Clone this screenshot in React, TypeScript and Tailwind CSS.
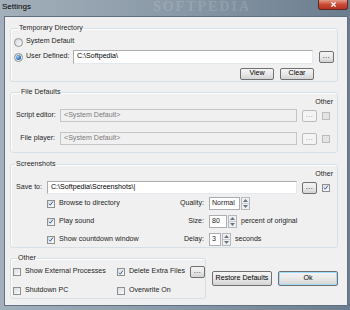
import React from "react";

const font = "font-['Liberation_Sans',Arial,sans-serif]";

function Check({ checked, disabled }: { checked?: boolean; disabled?: boolean }) {
  return (
    <span
      className={`flex h-[8px] w-[8px] shrink-0 items-center justify-center border ${
        disabled
          ? "border-[#bcbcbc] bg-[#e4e4e4]"
          : "border-[#8e8f8f] bg-linear-to-br from-[#d9dde2] to-[#fbfbfb]"
      }`}
    >
      {checked && (
        <svg viewBox="0 0 8 8" className="h-[7px] w-[7px]">
          <path d="M1.4 4.3 L3.1 6.2 L6.6 1.4" fill="none" stroke="#34589a" strokeWidth="1.3" />
        </svg>
      )}
    </span>
  );
}

function Radio({ checked }: { checked?: boolean }) {
  return (
    <span className="flex h-[9px] w-[9px] shrink-0 items-center justify-center rounded-full border border-[#8e8f8f] bg-linear-to-br from-[#d4d8dd] to-[#fafafa]">
      {checked && (
        <span className="h-[5px] w-[5px] rounded-full bg-[radial-gradient(circle_at_35%_35%,#9fd3f7_0%,#2d6fb4_60%,#1c4f8c_100%)]" />
      )}
    </span>
  );
}

function Btn({
  children,
  className = "",
  disabled,
}: {
  children: React.ReactNode;
  className?: string;
  disabled?: boolean;
}) {
  return (
    <div
      className={`flex shrink-0 items-center justify-center rounded-[2px] border leading-none ${
        disabled
          ? "border-[#b8bcc0] bg-[#f4f4f4] text-[#8a8a8a]"
          : "border-[#707070] bg-linear-to-b from-[#f4f4f4] via-[#e9e9e9] to-[#d3d3d3] text-black"
      } ${className}`}
    >
      {children}
    </div>
  );
}

function Dots({ disabled }: { disabled?: boolean }) {
  return (
    <Btn disabled={disabled} className="h-[12px] w-[15px] pb-[3px] text-[7px] tracking-[0.5px]">
      ...
    </Btn>
  );
}

function Field({
  value,
  className = "",
  disabled,
}: {
  value: string;
  className?: string;
  disabled?: boolean;
}) {
  return (
    <div
      className={`flex h-[13px] shrink-0 items-center border pl-[3px] leading-none ${
        disabled
          ? "border-[#c3c5c8] bg-[#f0f0f0] text-[#7a7a7a]"
          : "border-[#abadb3] border-b-[#e3e9ef] border-r-[#e3e9ef] bg-white text-black"
      } ${className}`}
    >
      {value}
    </div>
  );
}

function Spin({ value, className }: { value: string; className: string }) {
  return (
    <div className={`flex h-[13px] shrink-0 ${className}`}>
      <div className="flex flex-1 items-center border border-[#abadb3] bg-white pl-[2px] leading-none">
        {value}
      </div>
      <div className="ml-[1px] flex w-[9px] flex-col border border-[#b5b9bd] bg-[#eef0f2]">
        <span className="flex flex-1 items-center justify-center border-b border-[#c9cdd1]">
          <svg viewBox="0 0 5 3" className="h-[3px] w-[5px]">
            <path d="M0 3 L2.5 0 L5 3 Z" fill="#6a7480" />
          </svg>
        </span>
        <span className="flex flex-1 items-center justify-center">
          <svg viewBox="0 0 5 3" className="h-[3px] w-[5px]">
            <path d="M0 0 L2.5 3 L5 0 Z" fill="#6a7480" />
          </svg>
        </span>
      </div>
    </div>
  );
}

function Group({
  title,
  className = "",
  children,
}: {
  title: string;
  className?: string;
  children: React.ReactNode;
}) {
  return (
    <fieldset
      className={`shrink-0 rounded-[3px] border border-[#d5dfe5] shadow-[inset_1px_1px_0_#fff] ${className}`}
    >
      <legend className="ml-[4px] px-[1px] leading-[9px] text-[#1e1e1e]">{title}</legend>
      {children}
    </fieldset>
  );
}

function CheckRow({
  label,
  checked,
  className = "",
}: {
  label: string;
  checked?: boolean;
  className?: string;
}) {
  return (
    <div className={`flex items-center gap-[4px] leading-none ${className}`}>
      <Check checked={checked} />
      <span className="whitespace-nowrap">{label}</span>
    </div>
  );
}

export default function App() {
  return (
    <div
      className={`flex h-[310px] w-[350px] flex-col overflow-hidden bg-linear-to-r from-[#a3b0bb] via-[#8a99a7] to-[#6b7d8e] text-[7.1px] text-[#1e1e1e] ${font}`}
    >
      {/* title bar */}
      <div className="flex h-[15px] shrink-0 items-start overflow-hidden">
        <span className="pl-[2px] pt-[3px] text-[8px] leading-none text-black">Settings</span>
        <span className="ml-[122px] font-['Liberation_Serif',serif] text-[14px] font-bold leading-[14px] tracking-[2px] text-white/15">
          SOFTPEDIA
        </span>
        <div className="ml-auto mr-[2px] flex h-[10px] w-[30px] items-center justify-center rounded-b-[3px] border border-t-0 border-[#5c2a24] bg-linear-to-b from-[#e39a88] via-[#c94a36] to-[#b8331f]">
          <svg viewBox="0 0 6 6" className="h-[5px] w-[5px]">
            <path d="M0.5 0.5 L5.5 5.5 M5.5 0.5 L0.5 5.5" stroke="#fff" strokeWidth="1.5" />
          </svg>
        </div>
      </div>

      {/* client area */}
      <div className="mb-[4px] ml-[4px] mr-[2px] mt-[1px] flex flex-1 flex-col border border-[#5f7082] bg-[#f0f0f0] pl-[5px] pr-[8px] pt-[7px]">
        {/* Temporary Directory */}
        <Group title="Temporary Directory" className="h-[58px] w-[328px] px-[3px]">
          <div className="mt-[3px] flex h-[12px] items-center gap-[3px] leading-none">
            <Radio />
            <span>System Default</span>
          </div>
          <div className="mt-[2px] flex h-[14px] items-center leading-none">
            <Radio checked />
            <span className="ml-[3px] w-[47px]">User Defined:</span>
            <Field value="C:\Softpedia\" className="h-[14px] w-[240px]" />
            <span className="ml-[6px]">
              <Dots />
            </span>
          </div>
          <div className="mt-[4px] flex justify-end gap-[6px] pr-[20px]">
            <Btn className="h-[12px] w-[34px]">View</Btn>
            <Btn className="h-[12px] w-[34px]">Clear</Btn>
          </div>
        </Group>

        {/* File Defaults */}
        <Group title="File Defaults" className="mt-[6px] h-[65px] w-[328px] pl-[5px]">
          <div className="mt-[2px] flex h-[8px] justify-end pr-[4px] leading-none">Other</div>
          <div className="mt-[2px] flex items-center gap-[5px]">
            <span className="w-[39px] whitespace-nowrap text-right leading-none">Script editor:</span>
            <Field value="<System Default>" disabled className="w-[237px]" />
            <Dots disabled />
            <Check disabled />
          </div>
          <div className="mt-[10px] flex items-center gap-[5px]">
            <span className="w-[39px] whitespace-nowrap text-right leading-none">File player:</span>
            <Field value="<System Default>" disabled className="w-[237px]" />
            <Dots disabled />
            <Check disabled />
          </div>
        </Group>

        {/* Screenshots */}
        <Group title="Screenshots" className="mt-[7px] h-[88px] w-[328px]">
          <div className="mt-[2px] flex h-[8px] justify-end pr-[4px] leading-none">Other</div>
          <div className="mt-[2px] flex items-center pl-[5px]">
            <span className="w-[31px] leading-none">Save to:</span>
            <Field value="C:\Softpedia\Screenshots\|" className="w-[250px]" />
            <span className="ml-[5px]">
              <Dots />
            </span>
            <span className="ml-[5px]">
              <Check checked />
            </span>
          </div>
          <div className="mt-[3px] flex flex-col gap-[5px]">
            <div className="flex h-[13px] items-center">
              <CheckRow label="Browse to directory" checked className="w-[139px] pl-[36px]" />
              <span className="w-[54px] text-right leading-none">Quality:</span>
              <Spin value="Normal" className="ml-[5px] w-[41px]" />
            </div>
            <div className="flex h-[13px] items-center">
              <CheckRow label="Play sound" checked className="w-[139px] pl-[36px]" />
              <span className="w-[54px] text-right leading-none">Size:</span>
              <Spin value="80" className="ml-[5px] w-[28px]" />
              <span className="ml-[4px] leading-none">percent of original</span>
            </div>
            <div className="flex h-[13px] items-center">
              <CheckRow label="Show countdown window" checked className="w-[139px] pl-[36px]" />
              <span className="w-[54px] text-right leading-none">Delay:</span>
              <Spin value="3" className="ml-[5px] w-[22px]" />
              <span className="ml-[4px] leading-none">seconds</span>
            </div>
          </div>
        </Group>

        {/* bottom row */}
        <div className="mt-[6px] flex items-start">
          <Group title="Other" className="h-[45px] w-[196px] pl-[2px]">
            <div className="mt-[3px] flex h-[12px] items-center">
              <CheckRow label="Show External Processes" className="w-[104px]" />
              <CheckRow label="Delete Extra Files" checked />
              <span className="ml-[5px]">
                <Dots />
              </span>
            </div>
            <div className="mt-[7px] flex h-[12px] items-center">
              <CheckRow label="Shutdown PC" className="w-[104px]" />
              <CheckRow label="Overwrite On" />
            </div>
          </Group>
          <div className="ml-[6px] mt-[17px] flex gap-[6px]">
            <Btn className="h-[15px] w-[60px]">Restore Defaults</Btn>
            <Btn className="h-[15px] w-[60px] border-[#3c9ade] shadow-[inset_0_0_0_1px_#9fdcfb]">Ok</Btn>
          </div>
        </div>
      </div>
    </div>
  );
}
